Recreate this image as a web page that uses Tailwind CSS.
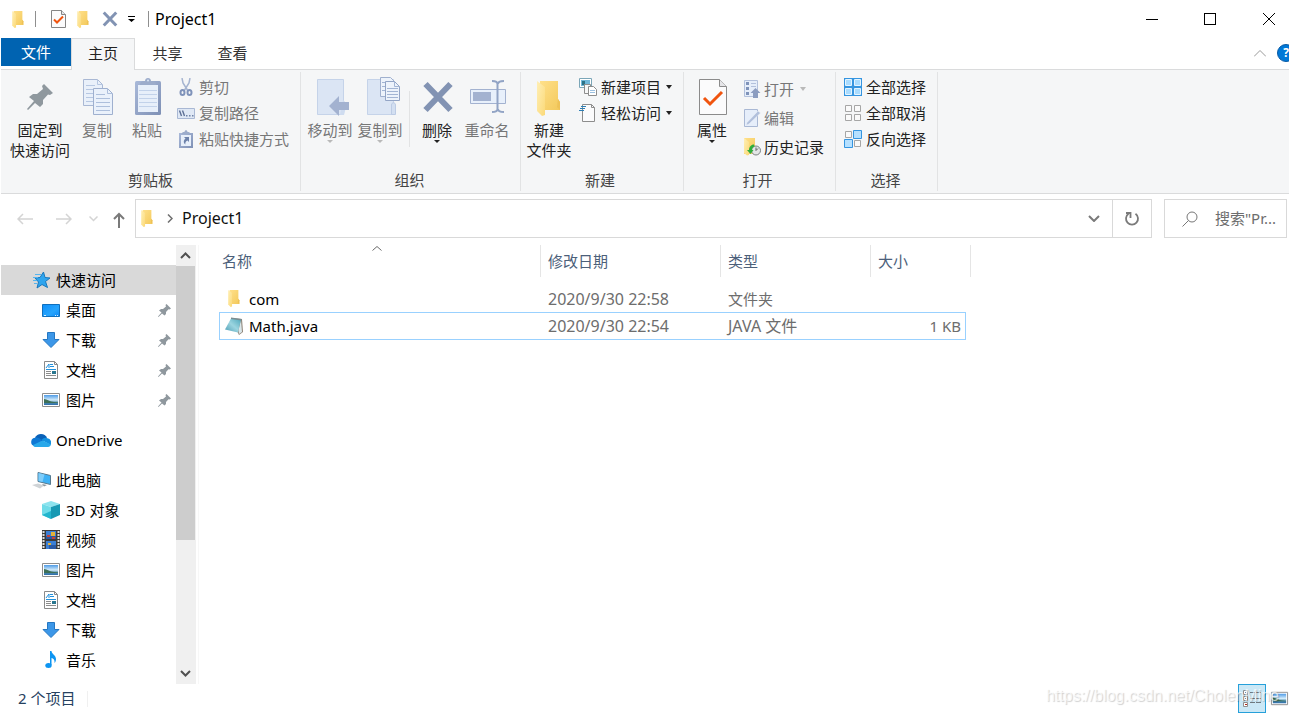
<!DOCTYPE html>
<html lang="zh-CN">
<head>
    <meta charset="UTF-8">
    <meta name="viewport" content="width=device-width, initial-scale=1.0">
    <title>Project1</title>
    <script src="https://cdn.jsdelivr.net/npm/@tailwindcss/browser@4"></script>
</head>
<body class="flex h-screen flex-col overflow-hidden bg-white pl-px font-['Noto_Sans','Noto_Sans_CJK_SC',sans-serif] text-[15px] leading-5 text-black">

    <!-- shared icons -->
    <svg class="absolute size-0" aria-hidden="true">
        <defs>
            <linearGradient id="folderFront" x1="0" x2="1" y1="0" y2="1"><stop offset="0" stop-color="#ffefb5"/><stop offset="1" stop-color="#fbd978"/></linearGradient>
            <linearGradient id="folderBack" x1="0" x2="1" y1="0" y2="1"><stop offset="0" stop-color="#ffe08a"/><stop offset="1" stop-color="#f3c95b"/></linearGradient>
            <linearGradient id="screen" x1="0" x2="1" y1="0" y2="1"><stop offset="0" stop-color="#0d8ffb"/><stop offset="0.6" stop-color="#27a5fd"/><stop offset="1" stop-color="#1089f5"/></linearGradient>
            <linearGradient id="sky" x1="0" x2="0" y1="0" y2="1"><stop offset="0" stop-color="#4f9be6"/><stop offset="0.5" stop-color="#d3ecfb"/><stop offset="0.75" stop-color="#4d8aa8"/><stop offset="1" stop-color="#2f6fb0"/></linearGradient>
            <linearGradient id="note" x1="1" x2="0" y1="0" y2="1"><stop offset="0" stop-color="#4da7bb"/><stop offset="0.5" stop-color="#9cd5e0"/><stop offset="1" stop-color="#4d9db5"/></linearGradient>
            <linearGradient id="board" x1="0" x2="1" y1="0" y2="1"><stop offset="0" stop-color="#a9b9d9"/><stop offset="1" stop-color="#7e90b5"/></linearGradient>
        </defs>
        <symbol id="folder" viewBox="0 0 24 35">
            <path d="M3 0h18v18l2 3v8H3z" fill="url(#folderBack)"/>
            <path d="M0 0l8 6v28l-3 1-5-5z" fill="url(#folderFront)"/>
            <path d="M21 18l2 3v8l-3-3z" fill="#eec257"/>
        </symbol>
        <symbol id="checkdoc" viewBox="0 0 28 36">
            <path d="M.5.5h20l7 7v28H.5z" fill="#fbfbfc" stroke="#8b8b8b"/>
            <path d="M20.500.5v7h7" fill="#e5e5e8" stroke="#8b8b8b"/>
            <path d="M5 19l6 6L23 13" fill="none" stroke="#f0540f" stroke-width="3"/>
        </symbol>
        <!-- small version with a full pixel outline -->
        <symbol id="checkdocSmall" viewBox="0 0 15 18">
            <path d="M.5.5h10l4 4v13H.5z" fill="#fbfbfc" stroke="#858585"/>
            <path d="M10.500.5v4h4" fill="#e5e5e8" stroke="#858585"/>
            <path d="M3 9.500l3 3 6-6" fill="none" stroke="#f0540f" stroke-width="2"/>
        </symbol>
        <symbol id="cross" viewBox="0 0 31 32">
            <path d="M3 3l25 26M28 3L3 29" stroke="#8293b3" stroke-width="6" fill="none"/>
        </symbol>
        <symbol id="pin" viewBox="7 8 26 26">
            <path d="M24 8l9 9-3 2-2-.5-5 5.500v4l-3 3-5-4-7 7-1-1 7-8-5-4 4-3h4l6-5-1-3z" fill="#8f989e"/>
        </symbol>
        <symbol id="download" viewBox="0 0 20 20">
            <path d="M6.500 2.500h7v7h4.500L10 17.500 2 9.500h4.500z" fill="#3c97e8" stroke="#2577c2"/>
        </symbol>
        <symbol id="document" viewBox="0 0 20 20">
            <path d="M3.500 1.500h10l3 3v14h-13z" fill="#fff" stroke="#8a8a8a"/>
            <path d="M13.500 1.500v3h3" fill="none" stroke="#8a8a8a"/>
            <path d="M5 8l3-4v4M9 4.500h3M9 6.500h4M5 9.500h10" stroke="#2291dd" fill="none"/>
            <path d="M5 11.500h5M5 13.500h5M5 15.500h10" stroke="#8c8c8c"/>
            <path d="M11 11h4v3h-4z" fill="#2a7790"/>
        </symbol>
        <symbol id="picture" viewBox="0 0 20 20">
            <path d="M1.500 3.500h17v13h-17z" fill="#fff" stroke="#8e8e8e"/>
            <path d="M3 5h14v10H3z" fill="url(#sky)"/>
            <path d="M3 9c3 0 6 3 10 3l4 .5V13H3z" fill="#3e7057"/>
        </symbol>
    </svg>

    <!-- title bar -->
    <header class="flex h-[38px] shrink-0 items-center">
        <svg class="ml-[11px] h-[17px] w-3"><use href="#folder"/></svg>
        <span class="ml-[11px] h-4 w-px bg-[#8f8f8f]"></span>
        <button class="ml-[15px]" aria-label="属性"><svg class="block h-[18px] w-[15px]"><use href="#checkdocSmall"/></svg></button>
        <button class="ml-[11px]" aria-label="新建文件夹"><svg class="block h-[17px] w-3"><use href="#folder"/></svg></button>
        <button class="ml-[13px]" aria-label="删除"><svg class="block size-4"><use href="#cross"/></svg></button>
        <button class="ml-[10px]" aria-label="自定义快速访问工具栏">
            <svg class="block h-[6px] w-[7px]" viewBox="0 0 7 6"><path d="M0 0h7v1H0zM0 3h7L3.500 6z"/></svg>
        </button>
        <span class="ml-[13px] h-4 w-px bg-[#8f8f8f]"></span>
        <h1 class="ml-[6px] text-base leading-5">Project1</h1>
        <div class="ml-auto flex h-full">
            <button class="flex w-[58px] items-center justify-center" aria-label="最小化"><span class="h-px w-3 bg-black"></span></button>
            <button class="flex w-[58px] items-center justify-center" aria-label="最大化"><span class="size-3 border border-black"></span></button>
            <button class="flex w-[50px] items-center pl-6" aria-label="关闭">
                <svg class="size-3" viewBox="0 0 12 12"><path d="M0 0l12 12M12 0L0 12" stroke="#000"/></svg>
            </button>
        </div>
    </header>

    <!-- tabs -->
    <nav class="flex h-8 shrink-0 border-b border-[#dadbdc]">
        <button class="h-7 w-[70px] bg-[#0063b1] text-white">文件</button>
        <button class="-mb-px w-16 border border-b-0 border-[#dadbdc] bg-[#f5f6f7] pb-1 text-[#222]">主页</button>
        <button class="w-[65px] pb-0.5 text-[#333]">共享</button>
        <button class="w-[65px] pb-0.5 text-[#333]">查看</button>
        <div class="ml-auto flex items-center gap-[11px] overflow-hidden pb-px">
            <button aria-label="折叠功能区"><svg class="block h-[7px] w-3" viewBox="0 0 12 7"><path d="M0 6.500l6-6 6 6" fill="none" stroke="#999"/></svg></button>
            <button class="-mr-[6px] size-[18px] rounded-full border border-[#0a5ba5] bg-[#0078d7] text-xs leading-4 font-bold text-white" aria-label="帮助">?</button>
        </div>
    </nav>

    <!-- ribbon -->
    <section class="flex shrink-0 border-b border-[#dadbdc] bg-[#f5f6f7] py-0.5 text-[#777]">
        <div class="flex h-[119px] w-[300px] flex-col border-r border-[#e2e3e4] pb-px">
            <div class="flex flex-1 items-start pt-0.5 pl-1">
                <button class="w-[70px] text-[#222]">
                    <svg class="mx-auto my-0.5 block h-[42px] w-10" viewBox="0 0 40 42"><use href="#pin" x="7" y="8" width="26" height="26"/></svg>
                    固定到<br>快速访问
                </button>
                <button class="w-11">
                    <svg class="mx-auto my-0.5 block h-[42px] w-10" viewBox="0 0 40 42">
                        <path d="M6.500 3.500h14l5 5v21h-19z" fill="#e9f0fa" stroke="#a9b8d4"/>
                        <path d="M20.500 3.500v5h5M9 9.500h9M9 13.500h14M9 17.500h14M9 21.500h14M9 25.500h14" fill="none" stroke="#b6c7e2"/>
                        <path d="M16.500 12.500h14l5 5v21h-19z" fill="#eaf1fb" stroke="#9fb0cf"/>
                        <path d="M30.500 12.500v5h5M19 18.500h9M19 22.500h14M19 26.500h14M19 30.500h14M19 34.500h14" fill="none" stroke="#adbfdc"/>
                    </svg>
                    复制
                </button>
                <button class="w-14">
                    <svg class="mx-auto my-0.5 block h-[42px] w-10" viewBox="0 0 40 42">
                        <rect x="8" y="5" width="26" height="34" rx="1.500" fill="url(#board)"/>
                        <path d="M11 9h20v27H11z" fill="#e7effa"/>
                        <path d="M12 14.500h18M12 18.500h18M12 22.500h18M12 26.500h18M12 30.500h18" stroke="#c2d2ea"/>
                        <path d="M13 9c0-3 2-4 5-4 0-4 6-4 6 0 3 0 5 1 5 4z" fill="#9caccb"/>
                        <circle cx="21" cy="4.500" r="1" fill="#dce6f4"/>
                    </svg>
                    粘贴
                </button>
                <div class="ml-0.5">
                    <button class="flex h-[26px] items-center gap-1">
                        <svg class="size-[18px]" viewBox="0 0 18 18">
                            <path d="M5 0l1 5 5 8M13 0l-1 5-5 8" fill="none" stroke="#a5b4d0" stroke-width="1.500"/>
                            <ellipse cx="5.500" cy="14.500" rx="2" ry="2.500" fill="none" stroke="#7f93ba" stroke-width="2"/>
                            <ellipse cx="12.500" cy="14.500" rx="2" ry="2.500" fill="none" stroke="#7f93ba" stroke-width="2"/>
                        </svg>
                        剪切
                    </button>
                    <button class="flex h-[26px] items-center gap-1">
                        <svg class="size-[18px]" viewBox="0 0 18 18">
                            <path d="M.5 4.500h17v10H.5z" fill="#dfe8f5" stroke="#a9b8d4"/>
                            <path d="M2.500 6.500l2 5.500M5.500 6.500l2 5.500" stroke="#5d7096" stroke-width="1.400"/>
                            <path d="M9 11h1.500v1.500H9zM12 11h1.500v1.500H12zM15 11h1.500v1.500H15z" fill="#6f81a6"/>
                        </svg>
                        复制路径
                    </button>
                    <button class="flex h-[26px] items-center gap-1">
                        <svg class="size-[18px]" viewBox="0 0 18 18">
                            <path d="M2 3h14v15H2z" fill="url(#board)"/>
                            <path d="M4 5h10v11H4z" fill="#e7effa"/>
                            <path d="M5 4c0-2 1-2 2.500-2 0-2.500 3-2.500 3 0C12 2 13 2 13 4z" fill="#9caccb"/>
                            <path d="M7 7h5v5l-1.500-1.500C8.500 11.500 8 13 8.500 14.500 6 13 6.500 10 8.500 8.500z" fill="#6d82ab"/>
                        </svg>
                        粘贴快捷方式
                    </button>
                </div>
            </div>
            <h2 class="text-center text-[#444]">剪贴板</h2>
        </div>

        <div class="flex h-[119px] w-[220px] flex-col border-r border-[#e2e3e4] pb-px">
            <div class="flex flex-1 items-start px-1 pt-0.5">
                <button class="w-[50px]">
                    <svg class="mx-auto my-0.5 block h-[42px] w-10" viewBox="0 0 40 42">
                        <path d="M7.500 3.500h26v35h-26z" fill="#dbe5f4" stroke="#c5d3e9"/>
                        <path d="M33 24c4 2 3 8 1 15h-4z" fill="#cfdcf0"/>
                        <path d="M19 30l10-10v6h10v8H29v6z" fill="#a3b2d0"/>
                    </svg>
                    移动到
                    <svg class="mx-auto block h-1 w-[6px]" viewBox="0 0 6 4"><path d="M0 0h6L3 3z" fill="#b9b9b9"/></svg>
                </button>
                <button class="w-[50px]">
                    <svg class="mx-auto my-0.5 block h-[42px] w-10" viewBox="0 0 40 42">
                        <path d="M7.500 3.500h26v35h-26z" fill="#dbe5f4" stroke="#c5d3e9"/>
                        <path d="M31.500 38.500V29c0-3 4-3 4 0v9.500z" fill="#d3dff1" stroke="#bccbe4"/>
                        <path d="M20.500 1.500h10l4 4v15h-14z" fill="#edf3fb" stroke="#a0b0ce"/>
                        <path d="M25.500 5.500h9l5 5v14h-14z" fill="#edf3fb" stroke="#93a5c6"/>
                        <path d="M34.500 5.500v5h5M27 12.500h11M27 15.500h11M27 18.500h11M27 21.500h11M22 6.500h3M22 10.500h3M22 14.500h3" fill="none" stroke="#a3b5d4"/>
                    </svg>
                    复制到
                    <svg class="mx-auto block h-1 w-[6px]" viewBox="0 0 6 4"><path d="M0 0h6L3 3z" fill="#b9b9b9"/></svg>
                </button>
                <span class="mx-1 mt-[17px] h-14 w-px bg-[#e2e3e4]"></span>
                <button class="w-[46px] text-[#222]">
                    <svg class="mx-auto my-0.5 block h-[42px] w-10" viewBox="0 0 40 42"><use href="#cross" x="5" y="5" width="32" height="32"/></svg>
                    删除
                    <svg class="mx-auto block h-1 w-[6px]" viewBox="0 0 6 4"><path d="M0 0h6L3 3z" fill="#222"/></svg>
                </button>
                <button class="w-[54px]">
                    <svg class="mx-auto my-0.5 block h-[42px] w-10" viewBox="0 0 40 42">
                        <path d="M3.500 13.500h35v14h-35z" fill="#e8f0fb" stroke="#a3b2d0"/>
                        <path d="M6 16h18v9H6z" fill="#a3b2d0"/>
                        <path d="M25 5c4 0 5.500 1 5.500 3v25c0 2-1.500 3-5.500 3M37 5c-4 0-6 1-6 3M37 36c-4 0-6-1-6-3" fill="none" stroke="#92a4c5" stroke-width="2"/>
                    </svg>
                    重命名
                </button>
            </div>
            <h2 class="pr-0.5 text-center text-[#444]">组织</h2>
        </div>

        <div class="flex h-[119px] w-[163px] flex-col border-r border-[#e2e3e4] pb-px text-[#222]">
            <div class="flex flex-1 items-start pt-0.5">
                <button class="w-14">
                    <svg class="mx-auto my-0.5 block h-[42px] w-10" viewBox="0 0 40 42"><use href="#folder" x="8" y="5" width="24" height="35"/></svg>
                    新建<br>文件夹
                </button>
                <div class="ml-0.5">
                    <button class="flex h-[26px] items-center gap-1">
                        <svg class="size-[18px]" viewBox="0 0 18 18">
                            <path d="M.5.5h12v9H.5z" fill="#fff" stroke="#7ba6b8"/>
                            <path d="M2 2h9v6H2z" fill="#6fb7d9"/><path d="M3 3h3v4H3z" fill="#2c7287"/>
                            <path d="M5.500 6.500h6v9h-6z" fill="#f7f7f7" stroke="#8d8d8d"/>
                            <path d="M9.500 8.500h5l3 3v6h-8z" fill="#fff" stroke="#8d8d8d"/>
                            <path d="M11 12.500h5M11 14.500h5" stroke="#9cc0e0"/>
                        </svg>
                        新建项目
                        <svg class="ml-px h-1 w-[6px]" viewBox="0 0 6 4"><path d="M0 0h6L3 4z" fill="#222"/></svg>
                    </button>
                    <button class="flex h-[26px] items-center gap-1">
                        <svg class="size-[18px]" viewBox="0 0 18 18">
                            <path d="M3.500.5h9l3 3v14h-12z" fill="#fbfbfc" stroke="#8d8d8d"/>
                            <path d="M12.500.5v3h3" fill="none" stroke="#8d8d8d"/>
                            <path d="M2 2.500h5M1 4.500h5M0 6.500h5" stroke="#2e7fb5"/>
                        </svg>
                        轻松访问
                        <svg class="ml-px h-1 w-[6px]" viewBox="0 0 6 4"><path d="M0 0h6L3 4z" fill="#222"/></svg>
                    </button>
                </div>
            </div>
            <h2 class="pr-1 text-center text-[#444]">新建</h2>
        </div>

        <div class="flex h-[119px] w-[152px] flex-col border-r border-[#e2e3e4] pb-px">
            <div class="flex flex-1 items-start pt-0.5">
                <button class="w-14 text-[#222]">
                    <svg class="mx-auto my-0.5 block h-[42px] w-10" viewBox="0 0 40 42"><use href="#checkdoc" x="7" y="3" width="28" height="36"/></svg>
                    属性
                    <svg class="mx-auto block h-1 w-[6px]" viewBox="0 0 6 4"><path d="M0 0h6L3 3z" fill="#222"/></svg>
                </button>
                <div class="ml-[3px]">
                    <button class="flex h-[29px] items-center gap-[3px]">
                        <svg class="size-[18px]" viewBox="0 0 18 18">
                            <path d="M1.500.5h13v16h-13z" fill="#e6eefa" stroke="#b3c1dc"/>
                            <path d="M3 2h3v3H3zM3 7h3v3H3zM3 12h3v3H3z" fill="#7f93ba"/>
                            <path d="M8 3.500h5M8 6.500h5" stroke="#b3c1dc"/>
                            <path d="M12.500 8l5 5H15v5h-5v-5H7.500z" fill="#8c9dc0"/>
                        </svg>
                        打开
                        <svg class="ml-[3px] h-1 w-[6px]" viewBox="0 0 6 4"><path d="M0 0h6L3 4z" fill="#b9b9b9"/></svg>
                    </button>
                    <button class="flex h-[29px] items-center gap-[3px]">
                        <svg class="size-[18px]" viewBox="0 0 18 18">
                            <path d="M1.500.5h13v17h-13z" fill="#e6eefa" stroke="#a9b8d4"/>
                            <path d="M3 16.500l1-3L15 2l2.500 2L6 15z" fill="#b1c0dc" stroke="#f2f6fc" stroke-width=".5"/>
                        </svg>
                        编辑
                    </button>
                    <button class="flex h-[29px] items-center gap-[3px] text-[#222]">
                        <svg class="size-[18px]" viewBox="0 0 18 18">
                            <path d="M1 0h11v16H1z" fill="url(#folderBack)"/>
                            <path d="M1 0l5 4v13l-2 .5L1 15z" fill="url(#folderFront)"/>
                            <circle cx="13" cy="12.500" r="4.500" fill="#e3e6e6" stroke="#7b8383"/>
                            <path d="M13 9.500v3l2-2" fill="none" stroke="#59615f"/>
                            <path d="M11 6.500c-3 0-5 2.500-5 5.500H4l3.500 4 3-4H9c0-2 1-3 2.500-3.500z" fill="#2fae3b"/>
                        </svg>
                        历史记录
                    </button>
                </div>
            </div>
            <h2 class="pr-1 text-center text-[#444]">打开</h2>
        </div>

        <div class="flex h-[119px] w-[102px] flex-col border-r border-[#e2e3e4] pb-px text-[#222]">
            <div class="flex-1 pt-0.5 pl-2">
                <button class="flex h-[26px] items-center gap-1">
                    <svg class="size-[18px]" viewBox="0 0 18 18">
                        <path d="M0 0h18v18H0z" fill="#3595e0"/>
                        <path d="M1.500 1.500h6v6h-6zM10.500 1.500h6v6h-6zM1.500 10.500h6v6h-6zM10.500 10.500h6v6h-6z" fill="#a9dcff" stroke="#e4f4ff"/>
                    </svg>
                    全部选择
                </button>
                <button class="flex h-[26px] items-center gap-1">
                    <svg class="size-[18px]" viewBox="0 0 18 18">
                        <path d="M1.500 1.500h6v6h-6zM10.500 1.500h6v6h-6zM1.500 10.500h6v6h-6zM10.500 10.500h6v6h-6z" fill="#fafafa" stroke="#a6a6a6"/>
                    </svg>
                    全部取消
                </button>
                <button class="flex h-[26px] items-center gap-1">
                    <svg class="size-[18px]" viewBox="0 0 18 18">
                        <path d="M1.500 1.500h6v6h-6zM10.500 10.500h6v6h-6z" fill="#fafafa" stroke="#a6a6a6"/>
                        <path d="M9.500.5h8v8h-8zM.5 9.500h8v8h-8z" fill="#b5e0ff" stroke="#3595e0"/>
                    </svg>
                    反向选择
                </button>
            </div>
            <h2 class="pr-0.5 text-center text-[#444]">选择</h2>
        </div>
    </section>

    <!-- address bar -->
    <div class="flex shrink-0 items-center pt-[5px] pr-0.5 pb-[7px]">
        <button class="ml-4" aria-label="后退"><svg class="block h-3 w-4" viewBox="0 0 16 12"><path d="M16 6H1M6 1L1 6l5 5" fill="none" stroke="#d4d4d4" stroke-width="1.500"/></svg></button>
        <button class="ml-[23px]" aria-label="前进"><svg class="block h-3 w-4" viewBox="0 0 16 12"><path d="M0 6h15M10 1l5 5-5 5" fill="none" stroke="#d4d4d4" stroke-width="1.500"/></svg></button>
        <button class="ml-[17px]" aria-label="最近浏览的位置"><svg class="block h-[6px] w-[9px]" viewBox="0 0 9 6"><path d="M.5.5l4 4 4-4" fill="none" stroke="#d4d4d4" stroke-width="1.500"/></svg></button>
        <button class="mt-[3px] ml-[15px]" aria-label="上移"><svg class="block h-4 w-3" viewBox="0 0 12 16"><path d="M6 16V2M1 7l5-5 5 5" fill="none" stroke="#7a7a7a" stroke-width="2"/></svg></button>
        <div class="ml-[10px] flex h-[39px] flex-1 items-center border border-[#d9d9d9]">
            <svg class="ml-[5px] h-[17px] w-3"><use href="#folder"/></svg>
            <svg class="ml-[14px] h-[9px] w-[6px]" viewBox="0 0 6 9"><path d="M1 .5l4 4-4 4" fill="none" stroke="#6e6e6e" stroke-width="1.500"/></svg>
            <a href="#" class="ml-[9px] pb-0.5 text-base leading-5 text-[#111]">Project1</a>
            <button class="mr-3 ml-auto" aria-label="历史地址"><svg class="block h-[7px] w-3" viewBox="0 0 12 7"><path d="M1 1l5 5 5-5" fill="none" stroke="#7a7a7a" stroke-width="2"/></svg></button>
            <button class="flex h-full w-[39px] items-center justify-center border-l border-[#d9d9d9]" aria-label="刷新">
                <svg class="size-4" viewBox="0 0 16 16"><path d="M11.500 2.800a6 6 0 1 1-7 0M2 2h4.500v5" fill="none" stroke="#7a7a7a" stroke-width="1.800"/></svg>
            </button>
        </div>
        <label class="ml-3 flex h-[39px] w-[123px] items-center border border-[#d9d9d9]">
            <svg class="ml-[17px] size-4 shrink-0" viewBox="0 0 16 16"><circle cx="10" cy="6" r="5" fill="none" stroke="#777"/><path d="M6.500 9.500L.5 15.500" stroke="#777"/></svg>
            <input type="text" placeholder='搜索"Pr...' aria-label="搜索" class="ml-[17px] w-full min-w-0 pb-0.5 outline-none placeholder:text-[#6d6d6d]">
        </label>
    </div>

    <main class="flex min-h-0 flex-1">
        <!-- navigation pane -->
        <aside class="w-[175px] pt-5">
            <a href="#" class="flex h-[30px] items-center gap-[5px] bg-[#d9d9d9] pl-[30px]">
                <svg class="size-5" viewBox="0 0 20 20">
                    <path d="M12.500 2l1.500 5.500 5 .5-4.500 3.500 2 6-5.500-3-5 3.500 1.500-6L4 8l5-.5z" fill="#2fa5ee" stroke="#1878bd"/>
                    <path d="M4 4.500h6M2 7.500h5M2 10.500h4M3 13.500h3" stroke="#55b4ee"/>
                </svg>
                快速访问
            </a>
            <a href="#" class="flex h-[30px] items-center gap-[5px] pr-[5px] pl-10">
                <svg class="size-5" viewBox="0 0 20 20"><path d="M1.500 4.500h17v12h-17z" fill="url(#screen)" stroke="#1070bd"/><path d="M3 15.500h2M14 15.500h1M16 15.500h1" stroke="#d7efff"/></svg>
                桌面
                <svg class="ml-auto size-[13px]"><use href="#pin"/></svg>
            </a>
            <a href="#" class="flex h-[30px] items-center gap-[5px] pr-[5px] pl-10">
                <svg class="size-5"><use href="#download"/></svg>
                下载
                <svg class="ml-auto size-[13px]"><use href="#pin"/></svg>
            </a>
            <a href="#" class="flex h-[30px] items-center gap-[5px] pr-[5px] pl-10">
                <svg class="size-5"><use href="#document"/></svg>
                文档
                <svg class="ml-auto size-[13px]"><use href="#pin"/></svg>
            </a>
            <a href="#" class="flex h-[30px] items-center gap-[5px] pr-[5px] pl-10">
                <svg class="size-5"><use href="#picture"/></svg>
                图片
                <svg class="ml-auto size-[13px]"><use href="#pin"/></svg>
            </a>
            <a href="#" class="mt-[10px] flex h-[30px] items-center gap-[5px] pl-[30px]">
                <svg class="size-5" viewBox="0 0 20 20">
                    <path d="M4 8a6.500 6.500 0 0 1 12 0l-5 4z" fill="#0a61b8"/>
                    <path d="M3.500 16a4.200 4.200 0 0 1 1-8.300c2-.5 4.500.8 6.500 2.300l-4 6z" fill="#0f78d4"/>
                    <path d="M10.500 10c2-2.500 4-2.800 6-1.800A4.500 4.500 0 0 1 19.500 15z" fill="#1490df"/>
                    <path d="M2 15l9.500-4.500L20 14.500c-.5 1.500-1.500 2.500-3 2.500H4c-1 0-1.500-.8-2-2z" fill="#28a8ea"/>
                </svg>
                OneDrive
            </a>
            <a href="#" class="mt-[10px] flex h-[30px] items-center gap-[5px] pl-[30px]">
                <svg class="size-5" viewBox="0 0 20 20">
                    <path d="M7 2.500l12.500 3v9L7 11.500z" fill="#3fb1f5" stroke="#56798f"/>
                    <path d="M7.500 3l6 1.500-2 7.500-4-1z" fill="#7fcdfa"/>
                    <path d="M1 15l6-1.500 6 2L9 18.500z" fill="#cfd3d6"/><path d="M11 14l5 1-3 1.500z" fill="#8a949b"/>
                </svg>
                此电脑
            </a>
            <a href="#" class="flex h-[30px] items-center gap-[5px] pl-10">
                <svg class="size-5" viewBox="0 0 20 20">
                    <path d="M1 4l9-3 9 3-9 3z" fill="#8ce3ee"/><path d="M1 4l9 3v12l-9-4z" fill="#6fdbe8"/><path d="M19 4l-9 3v12l9-4z" fill="#1799b3"/>
                    <path d="M1 15l9-4v8z" fill="#22b5cd"/>
                </svg>
                3D 对象
            </a>
            <a href="#" class="flex h-[30px] items-center gap-[5px] pl-10">
                <svg class="size-5" viewBox="0 0 20 20">
                    <path d="M1 0h18v19H1z" fill="#3b3b3b"/><path d="M5 1h10v8H5zM5 11h10v8H5z" fill="#3b7fd6"/>
                    <path d="M5 6h10v3H5zM8 15h7v4H8z" fill="#2a59a5"/><path d="M10 2h4v4h-4zM7 13h3v2H7z" fill="#e3b23a"/><path d="M6 5h3v2H6zM11 7h3v2h-3z" fill="#c4403a"/>
                    <path d="M2.500 1v18M17.500 1v18" stroke="#ddd" stroke-width="2" stroke-dasharray="2 1"/>
                </svg>
                视频
            </a>
            <a href="#" class="flex h-[30px] items-center gap-[5px] pl-10">
                <svg class="size-5"><use href="#picture"/></svg>
                图片
            </a>
            <a href="#" class="flex h-[30px] items-center gap-[5px] pl-10">
                <svg class="size-5"><use href="#document"/></svg>
                文档
            </a>
            <a href="#" class="flex h-[30px] items-center gap-[5px] pl-10">
                <svg class="size-5"><use href="#download"/></svg>
                下载
            </a>
            <a href="#" class="flex h-[30px] items-center gap-[5px] pl-10">
                <svg class="size-5" viewBox="0 0 20 20">
                    <path d="M9 1h1.500c0 3 4.500 4 4.500 8 0 1.500-.5 3-1.500 4 .5-3-1-4.500-3-5v7H9z" fill="#0d95f2"/>
                    <ellipse cx="7.500" cy="15.500" rx="3.200" ry="2.500" fill="#0d95f2"/>
                </svg>
                音乐
            </a>
        </aside>
        <div class="flex w-5 flex-col bg-[#f0f0f0] pr-px">
            <button class="flex h-[21px] items-center justify-center" aria-label="向上滚动"><svg class="h-[7px] w-[11px]" viewBox="0 0 11 7"><path d="M1 6l4.500-4.500L10 6" fill="none" stroke="#505050" stroke-width="2"/></svg></button>
            <div class="min-h-0 flex-1"><div class="h-[69%] bg-[#cdcdcd]"></div></div>
            <button class="flex h-[21px] items-center justify-center" aria-label="向下滚动"><svg class="h-[7px] w-[11px]" viewBox="0 0 11 7"><path d="M1 1l4.500 4.500L10 1" fill="none" stroke="#505050" stroke-width="2"/></svg></button>
        </div>

        <!-- file list -->
        <div class="ml-0.5 flex-1 border-l border-[#f7f7f7] pl-5">
            <table class="w-[752px] table-fixed border-separate border-spacing-0 text-left text-[#6d6d6d]">
                <thead class="text-[#4c607a]">
                    <tr>
                        <th class="relative h-8 w-[322px] border-r border-[#e5e5e5] p-0 pl-[3px] font-normal">
                            名称
                            <svg class="absolute top-px left-1/2 h-[5px] w-[10px] -translate-x-2" viewBox="0 0 10 5"><path d="M.5 4.500l4.500-4 4.500 4" fill="none" stroke="#6a6a6a"/></svg>
                        </th>
                        <th class="w-[180px] border-r border-[#e5e5e5] p-0 pl-[7px] font-normal">修改日期</th>
                        <th class="w-[150px] border-r border-[#e5e5e5] p-0 pl-[7px] font-normal">类型</th>
                        <th class="w-[95px] p-0 pl-[7px] font-normal">大小</th>
                        <th class="border-r border-[#e5e5e5] p-0"></th>
                    </tr>
                </thead>
                <tbody>
                    <tr>
                        <td class="h-[35px] pt-2 pl-[6px] text-black">
                            <div class="flex items-center gap-[6px]">
                                <svg class="h-[17px] w-[18px]"><use href="#folder"/></svg>
                                com
                            </div>
                        </td>
                        <td class="pt-2 pl-[7px] text-base leading-5">2020/9/30 22:58</td>
                        <td class="pt-2 pl-[7px]">文件夹</td>
                        <td></td>
                    </tr>
                    <tr>
                        <td class="h-7 border border-r-0 border-[#99d1ff] pl-[5px] text-black">
                            <div class="flex items-center gap-[6px]">
                                <svg class="size-[18px]" viewBox="0 0 18 18">
                                    <path d="M6 1l11 1 1 13-4 3z" fill="#8d8377"/>
                                    <path d="M16 3l1 12-3 2-.5-4z" fill="#d9e6ea"/>
                                    <path d="M6 1.500l10 1-3 13L0 12.500z" fill="url(#note)"/>
                                    <path d="M6 .5l11 1.500-.5 1.500L6 2z" fill="#7b8d92"/>
                                </svg>
                                Math.java
                            </div>
                        </td>
                        <td class="border-y border-[#99d1ff] pl-[7px] text-base leading-5">2020/9/30 22:54</td>
                        <td class="border-y border-[#99d1ff] pl-[7px] text-base leading-5">JAVA 文件</td>
                        <td class="border border-l-0 border-[#99d1ff] pr-1 text-right">1 KB</td>
                    </tr>
                </tbody>
            </table>
        </div>
    </main>

    <!-- status bar -->
    <footer class="relative flex h-[30px] shrink-0 items-center">
        <p class="ml-[17px] pb-0.5 text-[#26415f]">2 个项目</p>
        <span class="ml-3 h-4 w-px bg-[#f0f0f0]"></span>
        <button class="ml-auto flex h-[29px] w-7 items-center justify-center self-start border border-[#26a0da] bg-[#cbe8f6]" aria-label="详细信息">
            <svg class="h-[17px] w-[18px]" viewBox="0 0 18 17">
                <path d="M.5.500h4v4h-4zM.5 6.500h4v4h-4zM.5 12.500h4v4h-4z" fill="#fff" stroke="#8e8e8e"/>
                <path d="M2 2h1v1H2zM2 8h1v1H2z" fill="#555"/><path d="M2 14h2v1H2z" fill="#b02a1a"/>
                <path d="M7 2.500h5M13 2.500h5M7 8.500h5M13 8.500h5M7 12.500h5M13 12.500h5" stroke="#707a80"/>
            </svg>
        </button>
        <button class="ml-1 pb-0.5" aria-label="大缩略图"><svg class="block size-[19px]"><use href="#picture"/></svg></button>
        <span class="pointer-events-none absolute top-0 right-[10px] font-['Liberation_Sans',sans-serif] text-base text-white/70 [text-shadow:1px_1px_1px_#00000030]">https://blog.csdn.net/CholenMine</span>
    </footer>

</body>
</html>
